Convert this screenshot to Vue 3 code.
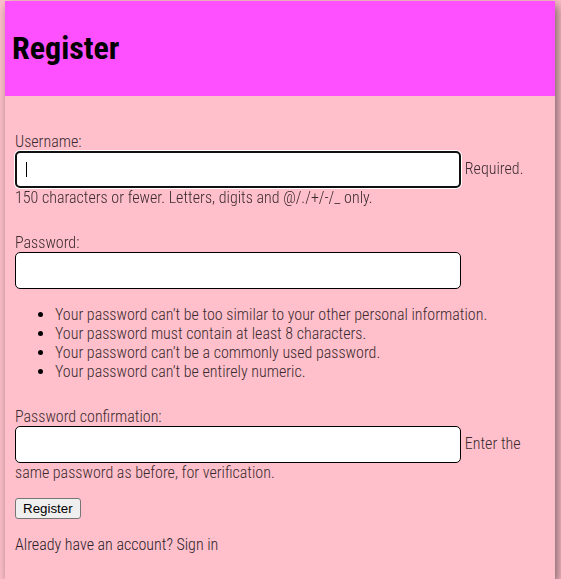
<script setup>
import { reactive, ref, onMounted } from 'vue'

const form = reactive({ username: '', password: '', confirmation: '' })
const usernameInput = ref(null)

const passwordRules = [
  'Your password can’t be too similar to your other personal information.',
  'Your password must contain at least 8 characters.',
  'Your password can’t be a commonly used password.',
  'Your password can’t be entirely numeric.',
]

onMounted(() => usernameInput.value.focus())
</script>

<template>
  <div class="card">
    <header class="card-header">
      <h1>Register</h1>
    </header>
    <main class="card-body">
      <form @submit.prevent>
        <div class="field">
          <label for="username">Username:</label>
          <input id="username" ref="usernameInput" v-model="form.username" type="text" maxlength="150" autocomplete="username" />
          Required. 150 characters or fewer. Letters, digits and @/./+/-/_ only.
        </div>
        <div class="field">
          <label for="password">Password:</label>
          <input id="password" v-model="form.password" type="password" autocomplete="new-password" />
          <ul>
            <li v-for="rule in passwordRules" :key="rule">{{ rule }}</li>
          </ul>
        </div>
        <div class="field">
          <label for="confirmation">Password confirmation:</label>
          <input id="confirmation" v-model="form.confirmation" type="password" autocomplete="new-password" />
          Enter the same password as before, for verification.
        </div>
        <button type="submit">Register</button>
      </form>
      <p class="signin">Already have an account? <a href="#">Sign in</a></p>
    </main>
  </div>
</template>

<style>
body {
  background: pink;
}
</style>

<style scoped>
.card {
  box-sizing: border-box;
  min-height: 100vh;
  margin: 1px 6px 0 5px;
  background: pink;
  box-shadow: 3px 4px 10px rgba(0, 0, 0, 0.5);
  color: #000;
  font-family: "Roboto Condensed", "Liberation Sans Narrow", Roboto, sans-serif;
  font-size: 16px;
  font-weight: 300;
  line-height: 19px;
}

.card-header {
  padding: 28px 7px 29px;
  background: #ff50ff;
}

h1 {
  margin: 0;
  font-size: 32px;
  font-weight: 700;
  line-height: 38px;
}

.card-body {
  padding: 36px 10px 24px;
}

.field {
  margin-bottom: 26px;
  color: #3a2a2e;
}

.field:last-of-type {
  margin-bottom: 16px;
}

label {
  display: block;
}

input {
  box-sizing: border-box;
  width: calc(84% + 1px);
  height: 37px;
  margin: 0;
  padding: 8px 10px;
  border: 1px solid #000;
  border-radius: 5px;
  background: #fff;
  color: #000;
  font-family: inherit;
  font-size: 16px;
  vertical-align: middle;
}

input:focus {
  outline: none;
  border: 2px solid #101010;
  box-shadow: 0 0 0 1px #fff;
}

#username:focus {
  caret-color: transparent;
  background: linear-gradient(#000, #000) 9px 9px / 1px 15px no-repeat #fff;
}

ul {
  margin: 16px 0 0;
  padding-left: 40px;
}

li::marker {
  color: #000;
}

button {
  display: block;
  height: 21px;
  margin: 0;
  padding: 0 7px;
  border: 1px solid #767676;
  border-radius: 3px;
  background: #efefef;
  color: #000;
  line-height: 19px;
}

.signin {
  margin: 16px 0 0;
  color: #2a1c28;
}

a {
  color: inherit;
  text-decoration: none;
}
</style>
